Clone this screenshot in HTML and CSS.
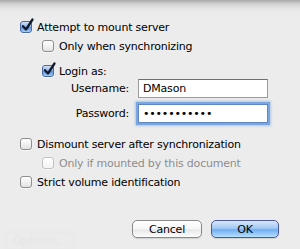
FILE: index.html
```html
<!DOCTYPE html>
<html lang="en">

<head>
    <meta charset="UTF-8">
    <title>Mount Server Options</title>
    <link rel="stylesheet" href="styles.css">
</head>

<body>
    <div class="sheet">
        <!-- faint window content showing through the sheet -->
        <div class="ghost">
            <span class="ghost-btn">Options...</span>
        </div>

        <div class="content">
            <label class="check top">
                <span class="box on"><svg viewBox="0 0 14 14"><path d="M3 7.2 L6 10.5 L12.5 0.5" /></svg></span>
                Attempt to mount server
            </label>

            <label class="check sub first">
                <span class="box"></span>
                Only when synchronizing
            </label>
            <label class="check sub login">
                <span class="box on"><svg viewBox="0 0 14 14"><path d="M3 7.2 L6 10.5 L12.5 0.5" /></svg></span>
                Login as:
            </label>

            <div class="field">
                <span class="field-label">Username:</span>
                <input class="text-input" type="text" value="DMason">
            </div>
            <div class="field pass">
                <span class="field-label">Password:</span>
                <input class="text-input focus" type="password" value="secretpass1">
            </div>

            <label class="check top dismount">
                <span class="box"></span>
                Dismount server after synchronization
            </label>
            <label class="check sub disabled">
                <span class="box"></span>
                Only if mounted by this document
            </label>
            <label class="check top strict">
                <span class="box"></span>
                Strict volume identification
            </label>

            <div class="buttons">
                <button class="btn">Cancel</button>
                <button class="btn default">OK</button>
            </div>
        </div>
    </div>
</body>

</html>
```

FILE: styles.css
```css
body {
    margin: 0;
    font-family: "DejaVu Sans", sans-serif;
    font-size: 11px;
    letter-spacing: -0.2px;
    color: #000;
}

.sheet {
    position: relative;
    width: 300px;
    height: 249px;
    overflow: hidden;
    background: linear-gradient(#a9a9a9 0px, #d2d2d2 4px, #e6e6e6 9px, #ececec 14px);
}

.ghost {
    position: absolute;
    left: 0;
    top: 0;
    width: 300px;
    height: 249px;
    filter: blur(1px);
    opacity: 0.4;
}

.ghost-btn {
    position: absolute;
    left: 6px;
    top: 232px;
    width: 66px;
    height: 16px;
    border: 1px solid #dadada;
    border-radius: 4px;
    color: #d4d4d4;
    font-size: 12px;
    text-align: center;
    line-height: 16px;
}

.content {
    position: relative;
    display: flex;
    flex-direction: column;
    padding-top: 19px;
}

.check {
    display: flex;
    align-items: center;
    height: 16px;
    white-space: nowrap;
}

.check.top {
    padding-left: 20px;
}

.check.sub {
    padding-left: 42px;
}

.check.first {
    margin-top: 3px;
}

.check.login {
    margin-top: 9px;
}

.check.dismount {
    margin-top: 13px;
}

.check.disabled {
    margin-top: 3px;
    color: #8c8c8c;
}

.check.strict {
    margin-top: 3px;
}

.box {
    position: relative;
    box-sizing: border-box;
    width: 12px;
    height: 12px;
    margin-right: 5px;
    border: 1px solid #8e8e8e;
    border-radius: 3px;
    background: linear-gradient(#ffffff, #f1f1f1 50%, #e2e2e2);
    box-shadow: 0 1px 0 rgba(255, 255, 255, 0.6);
    flex-shrink: 0;
}

.box.on {
    border-color: #4a6aa4;
    background: linear-gradient(#d4e4f8, #8db5ea 45%, #5b93de 55%, #a7ccf4);
}

.box svg {
    position: absolute;
    left: -1px;
    top: -3px;
    width: 14px;
    height: 14px;
    overflow: visible;
}

.box svg path {
    fill: none;
    stroke: #111a2a;
    stroke-width: 2.3px;
    stroke-linecap: round;
    stroke-linejoin: round;
}

.disabled .box {
    border-color: #c2c2c2;
    background: linear-gradient(#ffffff, #f4f4f4);
}

.field {
    display: flex;
    align-items: center;
    height: 19px;
}

.field.pass {
    margin-top: 6px;
}

.field-label {
    width: 129px;
    padding-right: 9px;
    text-align: right;
}

.text-input {
    box-sizing: border-box;
    width: 130px;
    height: 19px;
    margin: 0;
    padding: 0 4px;
    border: 1px solid #9b9b9b;
    border-top-color: #6f6f6f;
    font-family: "DejaVu Sans", sans-serif;
    font-size: 11px;
    letter-spacing: -0.2px;
    background: #fff;
    outline: none;
}

.text-input.focus {
    border-color: #5f87c4;
    box-shadow: 0 0 0 2px #7aa7e0, 0 0 2px 3px rgba(120, 160, 220, 0.5);
}

.buttons {
    display: flex;
    justify-content: flex-end;
    gap: 9px;
    margin-top: 30px;
    padding-right: 21px;
}

.btn {
    box-sizing: border-box;
    width: 70px;
    height: 18px;
    padding: 0;
    border: 1px solid #8a8a8a;
    border-radius: 5px;
    font-family: "DejaVu Sans", sans-serif;
    font-size: 11px;
    letter-spacing: -0.2px;
    color: #000;
    background: linear-gradient(#ffffff, #f6f6f6 50%, #e8e8e8 55%, #fdfdfd);
    box-shadow: 0 1px 1px rgba(0, 0, 0, 0.12);
}

.btn.default {
    width: 68px;
    border-color: #4c5a9c;
    background: linear-gradient(#d7e8fb, #a3c9f4 45%, #6faeef 55%, #b7e0fc);
}
```
